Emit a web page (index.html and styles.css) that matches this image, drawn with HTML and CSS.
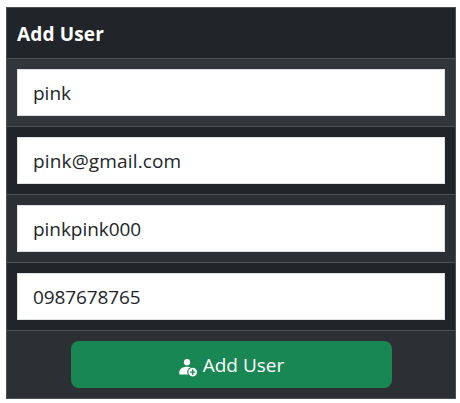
FILE: index.html
```html
<!DOCTYPE html>
<html lang="en">
<head>
<meta charset="utf-8">
<title>Add User</title>
<link rel="stylesheet" href="styles.css">
</head>
<body>
<form class="panel">
  <div class="row head"><h1 class="title">Add User</h1></div>
  <div class="row hover"><input class="field name" type="text" value="pink"></div>
  <div class="row"><input class="field email" type="text" value="pink@gmail.com"></div>
  <div class="row striped"><input class="field" type="text" value="pinkpink000"></div>
  <div class="row"><input class="field phone" type="text" value="0987678765"></div>
  <div class="row striped actions">
    <button class="submit" type="button">
      <svg class="icon" viewBox="0 0 19 19" aria-hidden="true">
        <circle cx="8" cy="4.200" r="3.100" fill="#fff"/>
        <path d="M0.300 16.600V14.400C0.300 10.900 3.800 8.800 8 8.800c1.700 0 3.200.3 4.500 1v6.800z" fill="#fff"/>
        <circle cx="13.700" cy="14.100" r="4.900" fill="#fff" stroke="#198754" stroke-width="1.100"/>
        <path d="M13.700 11.500v5.200M11.100 14.100h5.200" stroke="#198754" stroke-width="1.400" fill="none"/>
      </svg>
      <span class="label">Add User</span>
    </button>
  </div>
</form>
</body>
</html>
```

FILE: styles.css
```css
* { box-sizing: border-box; }

body {
  margin: 0;
  padding: 7px 4px 0 6px;
  background: #fff;
  font-family: "Segoe UI", "Open Sans", "Noto Sans", sans-serif;
}

.panel {
  width: 450px;
  border: 1px solid #4d5154;
}

.row {
  display: flex;
  height: 68px;
  padding: 10px;
  background: #212529;
  border-bottom: 1px solid #4d5154;
}

.row:last-child { height: 67px; border-bottom: 0; }
.head { height: 51px; align-items: center; }
.striped { background: #2c3034; }
.hover { background: #323539; }

.title {
  margin: 2px 0 0;
  color: #fff;
  font-size: 19px;
  font-weight: 700;
  line-height: 30px;
  letter-spacing: 0.15px;
}

.field {
  width: 100%;
  height: 47px;
  padding: 0 15px;
  border: 1px solid #dee2e6;
  border-radius: 0;
  outline: 0;
  background: #fff;
  color: #212529;
  font-family: inherit;
  font-size: 19px;
  letter-spacing: -0.05px;
}

.name { letter-spacing: 0; }
.email { letter-spacing: 0.15px; }
.phone { letter-spacing: -0.1px; }

.actions { justify-content: center; }

.submit {
  display: flex;
  align-items: center;
  justify-content: center;
  gap: 5px;
  width: 321px;
  height: 47px;
  padding: 0 0 0 1px;
  border: 0;
  border-radius: 8px;
  background: #198754;
  color: #fff;
  font-family: inherit;
  font-size: 19px;
}

.icon { width: 19px; height: 19px; margin-top: 6px; }
.label { letter-spacing: 0; }
```
